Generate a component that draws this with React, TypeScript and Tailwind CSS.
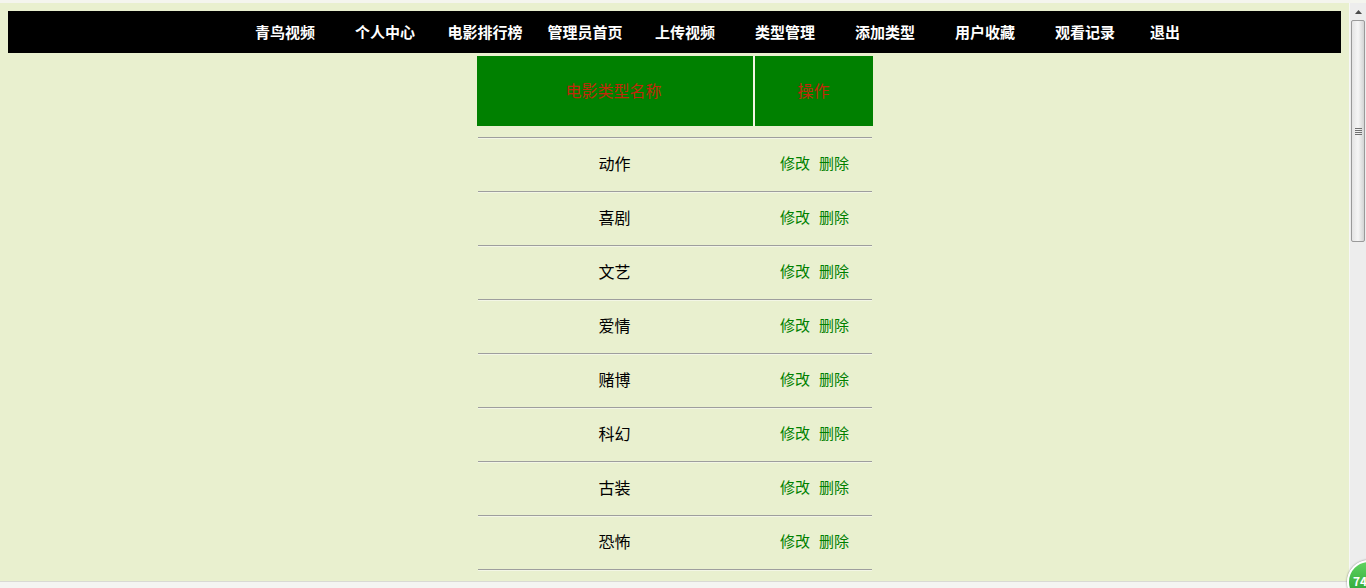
const navItems: { label: string; w: string }[] = [
  { label: "青鸟视频", w: "w-[100px]" },
  { label: "个人中心", w: "w-[100px]" },
  { label: "电影排行榜", w: "w-[100px]" },
  { label: "管理员首页", w: "w-[100px]" },
  { label: "上传视频", w: "w-[100px]" },
  { label: "类型管理", w: "w-[100px]" },
  { label: "添加类型", w: "w-[100px]" },
  { label: "用户收藏", w: "w-[100px]" },
  { label: "观看记录", w: "w-[100px]" },
  { label: "退出", w: "w-[60px]" },
];

const types = ["动作", "喜剧", "文艺", "爱情", "赌博", "科幻", "古装", "恐怖"];

const font = "font-['SimSun','Noto_Sans_CJK_SC',sans-serif]";

function Scrollbar() {
  return (
    <div className="flex w-[17px] flex-col border-l border-[#f7f7f7] bg-[#ededed]">
      <div className="flex h-[17px] items-center justify-center">
        <svg width="7" height="4" viewBox="0 0 7 4">
          <path d="M0 4 L3.5 0 L7 4 Z" fill="#4a4a4a" />
        </svg>
      </div>
      <div className="mx-[1px] flex h-[222px] items-center justify-center rounded-[2px] border border-[#9a9a9a] bg-gradient-to-r from-[#e4e4e4] via-[#f6f6f6] to-[#d4d4d4]">
        <div className="flex flex-col gap-[1px]">
          <div className="h-[1px] w-[7px] bg-[#707070]" />
          <div className="h-[1px] w-[7px] bg-[#707070]" />
          <div className="h-[1px] w-[7px] bg-[#707070]" />
          <div className="h-[1px] w-[7px] bg-[#707070]" />
        </div>
      </div>
    </div>
  );
}

export default function App() {
  return (
    <div className={`relative flex h-[588px] w-[1366px] flex-col overflow-hidden ${font}`}>
      <div className="h-[3px] bg-[#f4f5ee]" />
      <div className="flex min-h-0 flex-1">
        <main className="min-w-0 flex-1 overflow-hidden bg-[#e9f0cf] px-2 pt-2">
          <nav className="flex h-[42px] items-center bg-black pb-[2px] pl-[227px]">
            {navItems.map((item) => (
              <a
                key={item.label}
                className={`${item.w} shrink-0 whitespace-nowrap text-center text-[15px] font-bold leading-none text-white`}
              >
                {item.label}
              </a>
            ))}
          </nav>

          <div className="mx-auto mt-[3px] w-[396px]">
            <div className="flex h-[70px] gap-[2px] bg-[#f3f5e4] text-[16px] text-[#c0280a]">
              <div className="flex w-[276px] items-center justify-center bg-[#008000] pb-[2px] pr-[2px]">
                电影类型名称
              </div>
              <div className="flex flex-1 items-center justify-center bg-[#008000] pb-[2px]">
                操作
              </div>
            </div>

            <div className="mt-[11px]">
              {types.map((t) => (
                <div key={t}>
                  <div className="mx-[1px] h-[2px] border-t border-b border-t-[#9e9e9e] border-b-[#f3f6e6]" />
                  <div className="flex h-[52px] items-center pb-[4px]">
                    <div className="w-[276px] text-center text-[16px] text-black">{t}</div>
                    <div className="flex flex-1 justify-center gap-[9px] pl-[4px] text-[15px] text-[#008000]">
                      <a>修改</a>
                      <a>删除</a>
                    </div>
                  </div>
                </div>
              ))}
              <div className="mx-[1px] h-[2px] border-t border-b border-t-[#9e9e9e] border-b-[#f3f6e6]" />
            </div>
          </div>
        </main>
        <Scrollbar />
      </div>
      <div className="h-[7px] border-t border-[#d9d9d4] bg-[#f4f4f2]" />

      <div className="absolute left-[1347px] top-[560px] flex h-[44px] w-[44px] items-start justify-start rounded-full border-2 border-white bg-gradient-to-b from-[#5fd35f] to-[#1d9a2c] pl-[4px] pt-[10px] shadow-[0_0_2px_#6a6a6a]">
        <span className="text-[12px] font-bold text-white">74</span>
      </div>
    </div>
  );
}
